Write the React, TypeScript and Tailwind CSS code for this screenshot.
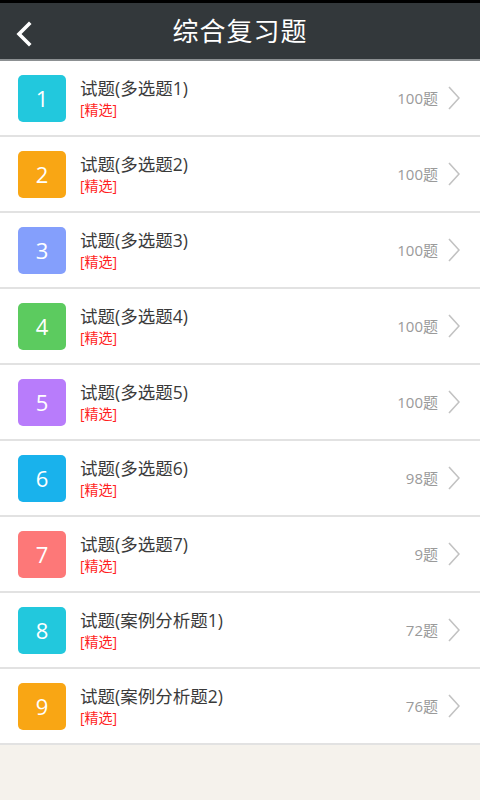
import React from 'react';

interface Item {
    num: number;
    title: string;
    count: string;
    color: string;
}

const items: Item[] = [
    { num: 1, title: '试题(多选题1)', count: '100题', color: 'bg-[#22c8dd]' },
    { num: 2, title: '试题(多选题2)', count: '100题', color: 'bg-[#f9a614]' },
    { num: 3, title: '试题(多选题3)', count: '100题', color: 'bg-[#849ffc]' },
    { num: 4, title: '试题(多选题4)', count: '100题', color: 'bg-[#5ccb5f]' },
    { num: 5, title: '试题(多选题5)', count: '100题', color: 'bg-[#b87cfb]' },
    { num: 6, title: '试题(多选题6)', count: '98题', color: 'bg-[#19b2ec]' },
    { num: 7, title: '试题(多选题7)', count: '9题', color: 'bg-[#fd7878]' },
    { num: 8, title: '试题(案例分析题1)', count: '72题', color: 'bg-[#22c8dd]' },
    { num: 9, title: '试题(案例分析题2)', count: '76题', color: 'bg-[#f9a614]' },
];

const font = "font-['Open_Sans','Noto_Sans_CJK_SC',sans-serif]";

const App: React.FC = () => {
    return (
        <div className={`min-h-[800px] bg-[#f5f2ec] ${font}`}>
            {/* Top bar */}
            <div className="h-[3px] bg-black" />
            <div className="relative flex h-[56px] items-center justify-center bg-[#33383b]">
                <svg
                    className="absolute left-[14px] top-[17px]"
                    width="22"
                    height="28"
                    viewBox="0 0 22 28"
                    fill="none"
                    stroke="white"
                    strokeWidth="3.6"
                    strokeLinecap="square"
                >
                    <path d="M15 4 L5 14 L15 24" />
                </svg>
                <h1 className="text-[26px] leading-none text-white tracking-[1px]">综合复习题</h1>
            </div>
            <div className="h-[2px] bg-[#8c9092]" />

            {/* List */}
            <div className="bg-white">
                {items.map((item) => (
                    <Row key={item.num} item={item} />
                ))}
            </div>
        </div>
    );
};

const Row: React.FC<{ item: Item }> = ({ item }) => {
    return (
        <div className="flex h-[76px] items-center border-b-2 border-[#e2e2e2] pl-[18px] pr-[20px]">
            <div
                className={`flex h-[47px] w-[48px] items-center justify-center rounded-[5px] text-[22px] text-white ${item.color}`}
            >
                {item.num}
            </div>
            <div className="ml-[14px] flex flex-1 flex-col">
                <span className="text-[17.5px] leading-[20px] text-[#3a3a3a]">{item.title}</span>
                <span className="mt-[3px] text-[14px] leading-[18px] text-[#ff1f1f]">[精选]</span>
            </div>
            <span className="text-[15px] text-[#9a9a9a]">{item.count}</span>
            <svg
                className="ml-[10px]"
                width="12"
                height="24"
                viewBox="0 0 12 24"
                fill="none"
                stroke="#c2c2c2"
                strokeWidth="1.6"
            >
                <path d="M1 1 L11 12 L1 23" />
            </svg>
        </div>
    );
};

export default App;
